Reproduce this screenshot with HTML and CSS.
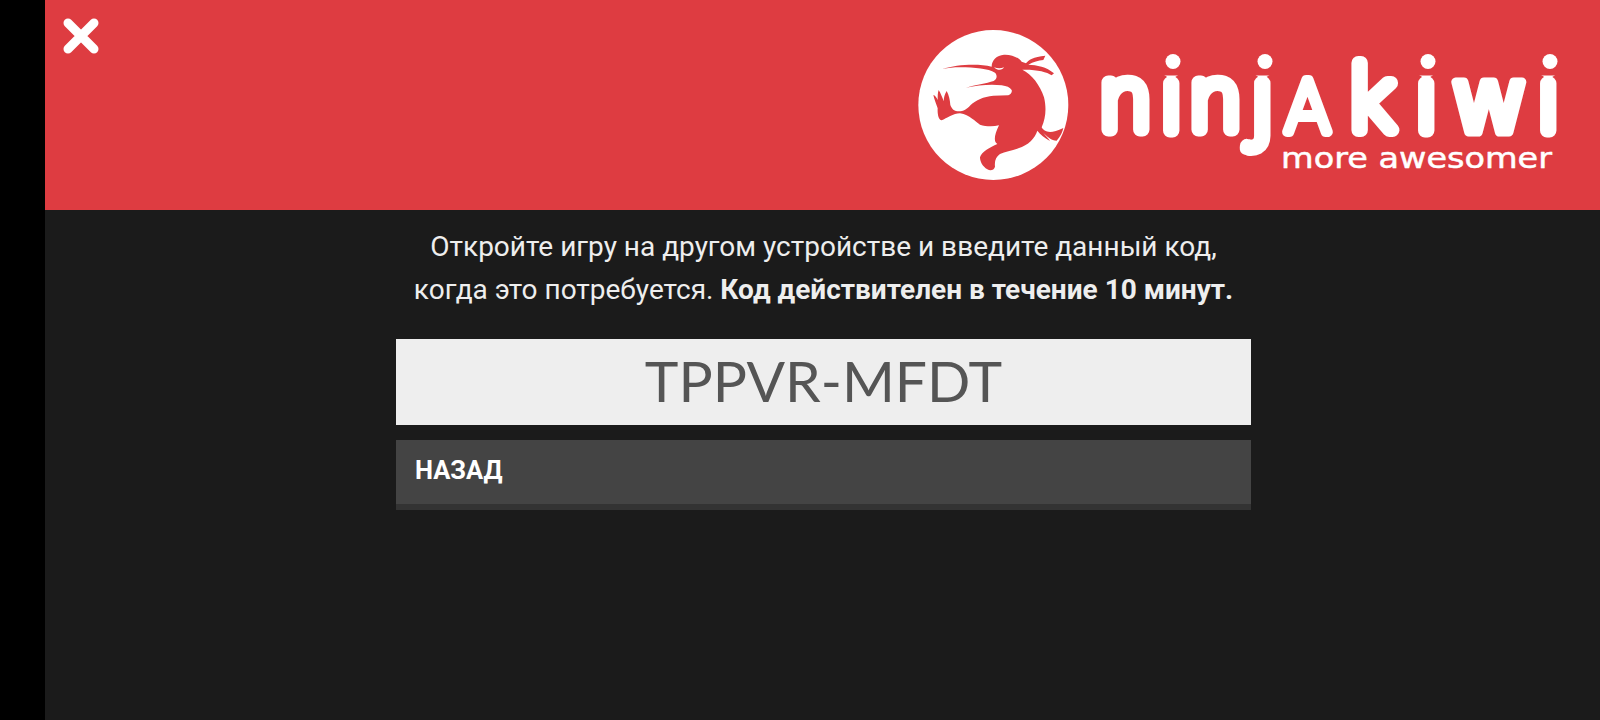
FILE: index.html
```html
<!DOCTYPE html>
<html lang="ru">
<head>
<meta charset="utf-8">
<title>Ninja Kiwi</title>
<link rel="stylesheet" href="styles.css">
</head>
<body>
<div class="rail"></div>
<main class="screen">
  <header class="banner">
    <button class="close" aria-label="Закрыть">
      <svg class="close-icon" viewBox="0 0 38 38" width="38" height="38"><path d="M6 6 L32 32 M32 6 L6 32"/></svg>
    </button>
    <svg class="logo" viewBox="0 0 670 180" width="670" height="180" role="img" aria-label="Ninja Kiwi">
      <g transform="scale(0.33333)">
        <circle class="logo-white" cx="280" cy="285" r="225"/>
        <path class="logo-red" d="M128 177 C170 163 235 160 275 170 C275 150 290 136 312 134 C335 133 355 142 365 155 L378 160 C385 150 400 140 436 137 L430 150 C415 152 400 155 385 164 C410 165 440 170 462 190 L455 196 C440 185 410 178 367 179 C395 192 420 225 432 262 C440 295 437 325 425 352 C432 365 450 374 490 354 C488 365 482 378 470 392 C455 392 440 380 428 366 C437 378 445 385 450 393 C435 385 420 372 412 362 C405 385 385 405 355 415 C335 423 315 425 300 432 C288 440 283 452 285 470 C282 480 272 484 262 478 C248 470 240 455 240 442 C245 425 270 412 292 402 C280 395 283 375 297 346 C280 350 258 350 240 344 C225 335 210 315 180 310 C160 310 140 325 125 331 C115 330 112 312 113 295 C108 280 103 268 100 255 C105 256 110 262 113 270 C113 258 113 248 116 240 C122 250 127 262 131 274 C131 264 134 252 140 243 C147 256 150 270 151 285 C155 295 160 302 172 304 C190 305 200 298 212 285 C228 270 250 260 280 257 L325 256 C333 253 337 246 335 240 C330 232 320 228 305 226 C275 222 235 225 198 233 C225 225 260 220 281 213 C292 207 292 195 285 188 C265 176 225 172 180 172 C160 172 145 174 128 177 Z"/>
        <path class="logo-white" d="M282 172 C292 175 302 176 312 172 C308 180 295 184 282 172 Z"/>
      </g>
      <text class="logo-word" y="120"><tspan x="201 262 291 353" y="120">ninj</tspan><tspan class="logo-a" x="386" y="122">A</tspan><tspan x="451 517" y="120">ki</tspan><tspan class="logo-w" x="552" y="122">w</tspan><tspan x="639" y="120">i</tspan></text>
      <rect class="logo-red" x="260" y="40" width="26" height="25.5"/>
      <rect class="logo-red" x="352" y="40" width="26" height="25.5"/>
      <rect class="logo-red" x="515" y="40" width="26" height="25.5"/>
      <rect class="logo-red" x="637" y="40" width="26" height="25.5"/>
      <circle class="logo-white" cx="273" cy="51.5" r="7.5"/>
      <circle class="logo-white" cx="365" cy="51.5" r="7.5"/>
      <circle class="logo-white" cx="528" cy="51.5" r="7.5"/>
      <circle class="logo-white" cx="650" cy="51.5" r="7.5"/>
      <text class="logo-tag" x="381" y="158" textLength="271" lengthAdjust="spacingAndGlyphs">more awesomer</text>
    </svg>
  </header>
  <section class="panel">
    <p class="message">Откройте игру на другом устройстве и введите данный код,<br>когда это потребуется. <strong>Код действителен в течение 10 минут.</strong></p>
    <div class="code">TPPVR-MFDT</div>
    <button class="back">НАЗАД</button>
  </section>
</main>
</body>
</html>
```
FILE: styles.css
```css
* { box-sizing: border-box; }
html, body { margin: 0; height: 100%; }
body {
  display: flex;
  height: 720px;
  overflow: hidden;
  background: #000;
  font-family: "Roboto", sans-serif;
}
.rail { width: 45px; flex: none; background: #000; }
.screen {
  flex: 1;
  display: flex;
  flex-direction: column;
  background: #1b1b1b;
}
.banner {
  height: 210px;
  flex: none;
  background: #de3c41;
  display: flex;
  justify-content: space-between;
  align-items: flex-start;
  padding: 10px 30px 0 17px;
}
.close {
  width: 38px;
  height: 38px;
  padding: 0;
  margin-top: 7px;
  border: 0;
  background: none;
  display: block;
}
.close-icon { display: block; fill: none; stroke: #fff; stroke-width: 9; stroke-linecap: round; }
.logo { display: block; }
.logo-white { fill: #fff; }
.logo-red { fill: #de3c41; }
.logo-word {
  font-family: "Roboto", sans-serif;
  font-weight: 100;
  font-size: 89px;
  fill: #fff;
  stroke: #fff;
  stroke-width: 14px;
  stroke-linejoin: round;
  stroke-linecap: round;
}
.logo-a { font-size: 72px; stroke-width: 10px; }
.logo-w { font-family: "DejaVu Sans", sans-serif; font-weight: 400; font-size: 90px; stroke-width: 9px; }
.logo-tag {
  font-family: "DejaVu Sans", sans-serif;
  font-size: 29px;
  fill: #fff;
  stroke: #fff;
  stroke-width: 0.5px;
  stroke-linejoin: round;
}
.panel {
  width: 855px;
  margin: 0 auto;
  position: relative;
  left: 1px;
  display: flex;
  flex-direction: column;
}
.message {
  margin: 15px 0 28px;
  text-align: center;
  color: #eee;
  font-size: 28px;
  line-height: 43px;
}
.message strong { font-weight: 700; }
.code {
  height: 86px;
  background: #eee;
  color: #555;
  font-family: "Lato", sans-serif;
  font-size: 57px;
  line-height: 83px;
  text-align: center;
}
.back {
  margin-top: 15px;
  height: 70px;
  border: 0;
  border-bottom: 6px solid #333;
  background: #444;
  color: #fff;
  font-family: "Roboto", sans-serif;
  font-weight: 700;
  font-size: 25.5px;
  text-align: left;
  padding: 0 19px 4px;
}
```
